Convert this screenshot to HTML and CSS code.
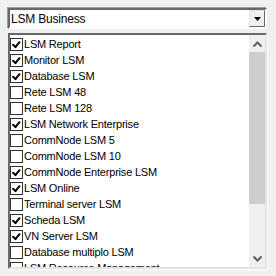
FILE: index.html
```html
<!DOCTYPE html>
<html>
<head>
<meta charset="utf-8">
<link rel="stylesheet" href="styles.css">
</head>
<body>
<div class="combo">
  <span class="combo-text">LSM Business</span>
  <span class="combo-btn"><svg width="7" height="4" viewBox="0 0 7 4"><path d="M0 0H7L3.5 4Z" fill="#000"/></svg></span>
</div>
<div class="listbox">
  <div class="items">
    <div class="item"><span class="cb on"></span>LSM Report</div>
    <div class="item"><span class="cb on"></span>Monitor LSM</div>
    <div class="item"><span class="cb on"></span>Database LSM</div>
    <div class="item"><span class="cb"></span>Rete LSM 48</div>
    <div class="item"><span class="cb"></span>Rete LSM 128</div>
    <div class="item"><span class="cb on"></span>LSM Network Enterprise</div>
    <div class="item"><span class="cb"></span>CommNode LSM 5</div>
    <div class="item"><span class="cb"></span>CommNode LSM 10</div>
    <div class="item"><span class="cb on"></span>CommNode Enterprise LSM</div>
    <div class="item"><span class="cb on"></span>LSM Online</div>
    <div class="item"><span class="cb"></span>Terminal server LSM</div>
    <div class="item"><span class="cb on"></span>Scheda LSM</div>
    <div class="item"><span class="cb on"></span>VN Server LSM</div>
    <div class="item"><span class="cb"></span>Database multiplo LSM</div>
    <div class="item"><span class="cb"></span>LSM Resource Management</div>
  </div>
  <div class="scrollbar">
    <span class="arrow"><svg width="9" height="6" viewBox="0 0 9 6"><path d="M0.5 5.5L4.5 1.5L8.5 5.5" stroke="#606060" stroke-width="2" fill="none"/></svg></span>
    <div class="track"><div class="thumb"></div></div>
    <span class="arrow"><svg width="9" height="6" viewBox="0 0 9 6"><path d="M0.5 0.5L4.5 4.5L8.5 0.5" stroke="#606060" stroke-width="2" fill="none"/></svg></span>
  </div>
</div>
</body>
</html>
```
FILE: styles.css
```css
html, body {
  margin: 0;
  padding: 0;
  background: #f0f0f0;
}
body {
  padding: 8px;
  font-family: "Liberation Sans", Arial, sans-serif;
  font-size: 11px;
  letter-spacing: -0.2px;
  color: #000;
}
.combo {
  box-sizing: border-box;
  width: 259px;
  height: 21px;
  display: flex;
  align-items: stretch;
  background: #fff;
  border-style: solid;
  border-width: 2px;
  border-color: #696969 #fff #fff #696969;
  box-shadow: -1px -1px 0 #a0a0a0;
}
.combo-text {
  flex: 1;
  display: flex;
  align-items: center;
  padding-left: 1px;
  font-size: 12px;
}
.combo-btn {
  width: 16px;
  display: flex;
  align-items: center;
  justify-content: center;
  background: #f0f0f0;
  border-style: solid;
  border-width: 1px;
  border-color: #e3e3e3 #696969 #696969 #e3e3e3;
  box-sizing: border-box;
}
.listbox {
  box-sizing: border-box;
  margin-top: 4px;
  width: 259px;
  height: 236px;
  display: flex;
  background: #fff;
  border-style: solid;
  border-width: 2px;
  border-color: #696969 #e3e3e3 #e3e3e3 #696969;
  box-shadow: 1px 1px 0 #fff;
}
.items {
  flex: 1;
  overflow: hidden;
  padding-top: 1px;
}
.item {
  height: 16px;
  display: flex;
  align-items: center;
  font-size: 11px;
  white-space: nowrap;
}
.cb {
  box-sizing: border-box;
  width: 13px;
  height: 13px;
  border: 1px solid #333;
  background: #fff;
  margin-right: 1px;
  position: relative;
}
.cb.on::after {
  content: "";
  position: absolute;
  left: 2px;
  top: 0px;
  width: 3px;
  height: 6px;
  border: solid #000;
  border-width: 0 2px 2px 0;
  transform: rotate(40deg) translate(1px, 0);
}
.scrollbar {
  width: 16px;
  display: flex;
  flex-direction: column;
  background: #f0f0f0;
}
.arrow {
  height: 17px;
  display: flex;
  align-items: center;
  justify-content: center;
}
.track {
  flex: 1;
}
.thumb {
  height: 152px;
  background: #cdcdcd;
}
```
